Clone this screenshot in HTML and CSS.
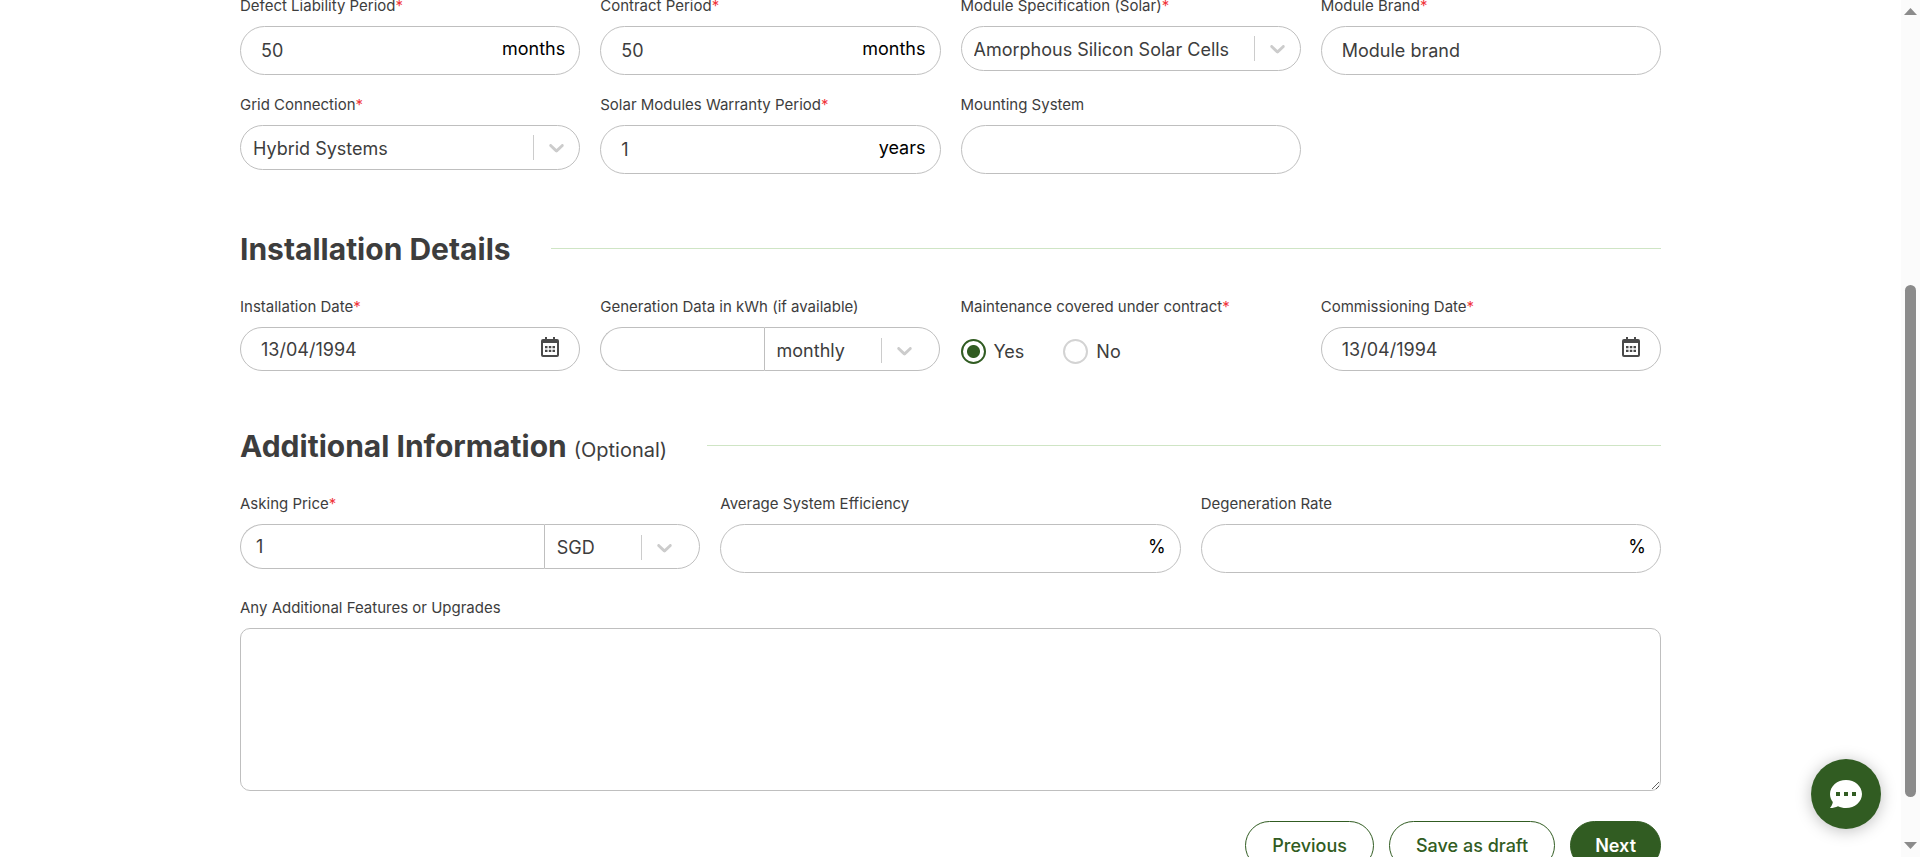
FILE: index.html
```html
<!DOCTYPE html>
<html lang="en">
<head>
<meta charset="utf-8">
<title>Project details</title>
<link rel="stylesheet" href="styles.css">
</head>
<body>
<svg class="defs" aria-hidden="true">
  <symbol id="chevron" viewBox="0 0 20 20"><path fill="currentColor" d="M4.516 7.548c0.436-0.446 1.043-0.481 1.576 0l3.908 3.747 3.908-3.747c0.533-0.481 1.141-0.446 1.574 0 0.436 0.445 0.408 1.197 0 1.615-0.406 0.418-4.695 4.502-4.695 4.502-0.217 0.223-0.502 0.335-0.787 0.335s-0.57-0.112-0.789-0.335c0 0-4.287-4.084-4.695-4.502s-0.436-1.17 0-1.615z"/></symbol>
  <symbol id="calendar" viewBox="0 0 18 20"><path fill="currentColor" fill-rule="evenodd" d="M4 0h2v2h6V0h2v2h2a2 2 0 0 1 2 2v14a2 2 0 0 1-2 2H2a2 2 0 0 1-2-2V4a2 2 0 0 1 2-2h2zM2 6v11.500a.5.5 0 0 0 .5.5h13a.5.5 0 0 0 .5-.5V6zM4 9h2.500v2.200H4zM7.800 9h2.500v2.200H7.800zM11.500 9H14v2.200h-2.500zM4 12.700h2.500v2.200H4zM7.800 12.700h2.500v2.200H7.800zM11.500 12.700H14v2.200h-2.500z"/></symbol>
</svg>
<main class="page">
  <form class="form">
    <div class="grid four">
      <div class="field">
        <label for="defect">Defect Liability Period<span class="req">*</span></label>
        <div class="control"><input id="defect" class="box" type="text" value="50"><span class="suffix">months</span></div>
      </div>
      <div class="field">
        <label for="contract">Contract Period<span class="req">*</span></label>
        <div class="control"><input id="contract" class="box" type="text" value="50"><span class="suffix">months</span></div>
      </div>
      <div class="field">
        <label for="spec">Module Specification (Solar)<span class="req">*</span></label>
        <div class="control"><select id="spec" class="box pick"><option>Amorphous Silicon Solar Cells</option></select><span class="arrow"><svg><use href="#chevron"/></svg></span></div>
      </div>
      <div class="field">
        <label for="brand">Module Brand<span class="req">*</span></label>
        <div class="control"><input id="brand" class="box" type="text" value="Module brand"></div>
      </div>
      <div class="field">
        <label for="gridc">Grid Connection<span class="req">*</span></label>
        <div class="control"><select id="gridc" class="box pick"><option>Hybrid Systems</option></select><span class="arrow"><svg><use href="#chevron"/></svg></span></div>
      </div>
      <div class="field">
        <label for="warranty">Solar Modules Warranty Period<span class="req">*</span></label>
        <div class="control"><input id="warranty" class="box" type="text" value="1"><span class="suffix">years</span></div>
      </div>
      <div class="field">
        <label for="mounting">Mounting System</label>
        <div class="control"><input id="mounting" class="box" type="text"></div>
      </div>
    </div>

    <h2 class="heading">Installation Details</h2>
    <div class="grid four">
      <div class="field">
        <label for="install">Installation Date<span class="req">*</span></label>
        <div class="control"><input id="install" class="box short" type="text" value="13/04/1994"><svg class="calendar"><use href="#calendar"/></svg></div>
      </div>
      <div class="field">
        <label for="gen">Generation Data in kWh (if available)</label>
        <div class="combo half">
          <input id="gen" class="box short start" type="text">
          <div class="control"><select class="box pick short end" aria-label="Generation data period"><option>monthly</option></select><span class="arrow inset"><svg><use href="#chevron"/></svg></span></div>
        </div>
      </div>
      <fieldset class="field">
        <legend>Maintenance covered under contract<span class="req">*</span></legend>
        <div class="radios">
          <label class="radio"><input type="radio" name="maint" checked>Yes</label>
          <label class="radio"><input type="radio" name="maint">No</label>
        </div>
      </fieldset>
      <div class="field">
        <label for="commission">Commissioning Date<span class="req">*</span></label>
        <div class="control"><input id="commission" class="box short" type="text" value="13/04/1994"><svg class="calendar"><use href="#calendar"/></svg></div>
      </div>
    </div>

    <h2 class="heading">Additional Information <small>(Optional)</small></h2>
    <div class="grid three">
      <div class="field">
        <label for="price">Asking Price<span class="req">*</span></label>
        <div class="combo third">
          <input id="price" class="box medium start" type="text" value="1">
          <div class="control"><select class="box pick end" aria-label="Currency"><option>SGD</option></select><span class="arrow inset"><svg><use href="#chevron"/></svg></span></div>
        </div>
      </div>
      <div class="field">
        <label for="eff">Average System Efficiency</label>
        <div class="control"><input id="eff" class="box" type="text"><span class="suffix">%</span></div>
      </div>
      <div class="field">
        <label for="degen">Degeneration Rate</label>
        <div class="control"><input id="degen" class="box" type="text"><span class="suffix">%</span></div>
      </div>
    </div>
    <div class="field notes">
      <label for="notes">Any Additional Features or Upgrades</label>
      <textarea id="notes"></textarea>
    </div>
    <div class="actions">
      <button type="button" class="btn">Previous</button>
      <button type="button" class="btn">Save as draft</button>
      <button type="button" class="btn primary">Next</button>
    </div>
  </form>
</main>
<button type="button" class="chat" aria-label="Open chat">
  <svg viewBox="0 0 32 28"><path fill="#fff" d="M16 0c8.800 0 16 6.200 16 14s-7.200 14-16 14c-3 0-5.600-.6-8-1.800C5.600 27.400 3 28 0 28c1.600-2 2.600-4 2.800-6C1 19.600 0 17 0 14 0 6.200 7.200 0 16 0z"/><path fill="#315c22" d="M6 12h4v4H6zM14 12h4v4h-4zM22 12h4v4h-4z"/></svg>
</button>
<div class="scrollbar" aria-hidden="true">
  <svg class="tip" viewBox="0 0 13 7"><path d="M6.500 0L13 7H0z"/></svg>
  <div class="track"><div class="thumb"></div></div>
  <svg class="tip" viewBox="0 0 13 7"><path d="M0 0h13L6.500 7z"/></svg>
</div>
</body>
</html>
```
FILE: styles.css
```css
* { box-sizing: border-box; }

body {
  margin: 0;
  height: 100vh;
  overflow: hidden;
  background: #fff;
  color: #3d3d3d;
  font-family: Inter, "Liberation Sans", sans-serif;
  font-size: 18px;
}

input, select, textarea, button { font: inherit; color: inherit; margin: 0; }

.defs { display: none; }

.page {
  margin: -4px 19px 0 0;
  padding: 0 240px;
}

.grid { display: grid; gap: 20px; align-items: start; }
.four { grid-template-columns: repeat(4, minmax(0, 1fr)); }
.three { grid-template-columns: repeat(3, minmax(0, 1fr)); }

.field {
  display: flex;
  flex-direction: column;
  min-width: 0;
  margin: 0;
  padding: 0;
  border: 0;
}

.field > label, legend {
  margin-bottom: 10px;
  padding: 0;
  font-size: 15px;
  line-height: 20px;
}

.req { color: #f0353b; }

.control { position: relative; display: flex; min-width: 0; }

.box {
  width: 100%;
  min-width: 0;
  height: 49px;
  padding: 0 20px;
  border: 1px solid #bfbfbf;
  border-radius: 25px;
  background: #fff;
  outline: 0;
}

.medium { height: 45px; }
.pick { height: 45px; padding: 2px 12px 0; appearance: none; }
.short { height: 44px; }

.suffix {
  position: absolute;
  top: 12px;
  right: 15px;
  line-height: 22px;
  color: #000;
}

.arrow {
  position: absolute;
  top: 0;
  right: 0;
  bottom: 0;
  display: flex;
  align-items: center;
  gap: 10px;
  padding-right: 11px;
  color: #ccc;
  pointer-events: none;
}
.arrow::before { content: ""; width: 1px; height: 25px; background: #ccc; }
.arrow svg { width: 25px; height: 25px; }
.arrow.inset { padding: 2px 23px 0 0; }

.calendar {
  position: absolute;
  top: 10px;
  right: 21px;
  width: 18px;
  height: 20px;
  color: #4a4a4a;
}

.combo { display: grid; }
.half { grid-template-columns: 48fr 52fr; }
.third { grid-template-columns: 66fr 34fr; }
.combo .start { border-right: 0; border-radius: 25px 0 0 25px; padding: 0 15px; }
.combo .end { border-radius: 0 25px 25px 0; }

.radios { display: flex; gap: 39px; padding-top: 12px; }
.radio { display: flex; align-items: center; gap: 8px; }
.radio input {
  appearance: none;
  width: 25px;
  height: 25px;
  border: 2px solid #d3d3d3;
  border-radius: 50%;
}
.radio input:checked {
  border-color: #315c22;
  background: radial-gradient(circle, #315c22 6px, #fff 7px);
}

.heading {
  display: flex;
  align-items: baseline;
  gap: 7px;
  margin: 55px 0 28px;
  font-size: 30px;
  font-weight: 700;
  line-height: 40px;
}
.heading small { font-size: 20px; font-weight: 400; line-height: 24px; }
.heading::after {
  content: "";
  flex: 1;
  align-self: center;
  height: 1px;
  margin: 0 0 2px 33px;
  background: #cfe5c5;
}

.notes { margin-top: 25px; }
textarea {
  height: 163px;
  padding: 12px 20px;
  border: 1px solid #bfbfbf;
  border-radius: 10px;
  outline: 0;
  resize: vertical;
}

.actions { display: flex; justify-content: flex-end; gap: 15px; margin-top: 30px; }
.btn {
  height: 49px;
  padding: 0 26px;
  border: 1px solid #315c22;
  border-radius: 25px;
  background: #fff;
  color: #315c22;
  font-weight: 500;
}
.btn.primary { padding: 0 24px; background: #315c22; color: #fff; font-weight: 600; }

.chat {
  position: fixed;
  right: 39px;
  bottom: 28px;
  display: grid;
  place-items: center;
  width: 70px;
  height: 70px;
  padding: 0;
  border: 0;
  border-radius: 50%;
  background: #315c22;
  box-shadow: 0 2px 16px rgba(0, 0, 0, 0.25);
}
.chat svg { width: 32px; height: 28px; }

.scrollbar {
  position: fixed;
  top: 0;
  right: 0;
  bottom: 0;
  display: flex;
  flex-direction: column;
  align-items: center;
  width: 19px;
  padding: 8px 0;
  background: #fbfbfb;
}
.tip { width: 13px; height: 7px; fill: #8b8b8b; }
.track { flex: 1; width: 11px; padding: 270px 0 45px; display: flex; }
.thumb { flex: 1; border-radius: 6px; background: #8b8b8b; }
```
